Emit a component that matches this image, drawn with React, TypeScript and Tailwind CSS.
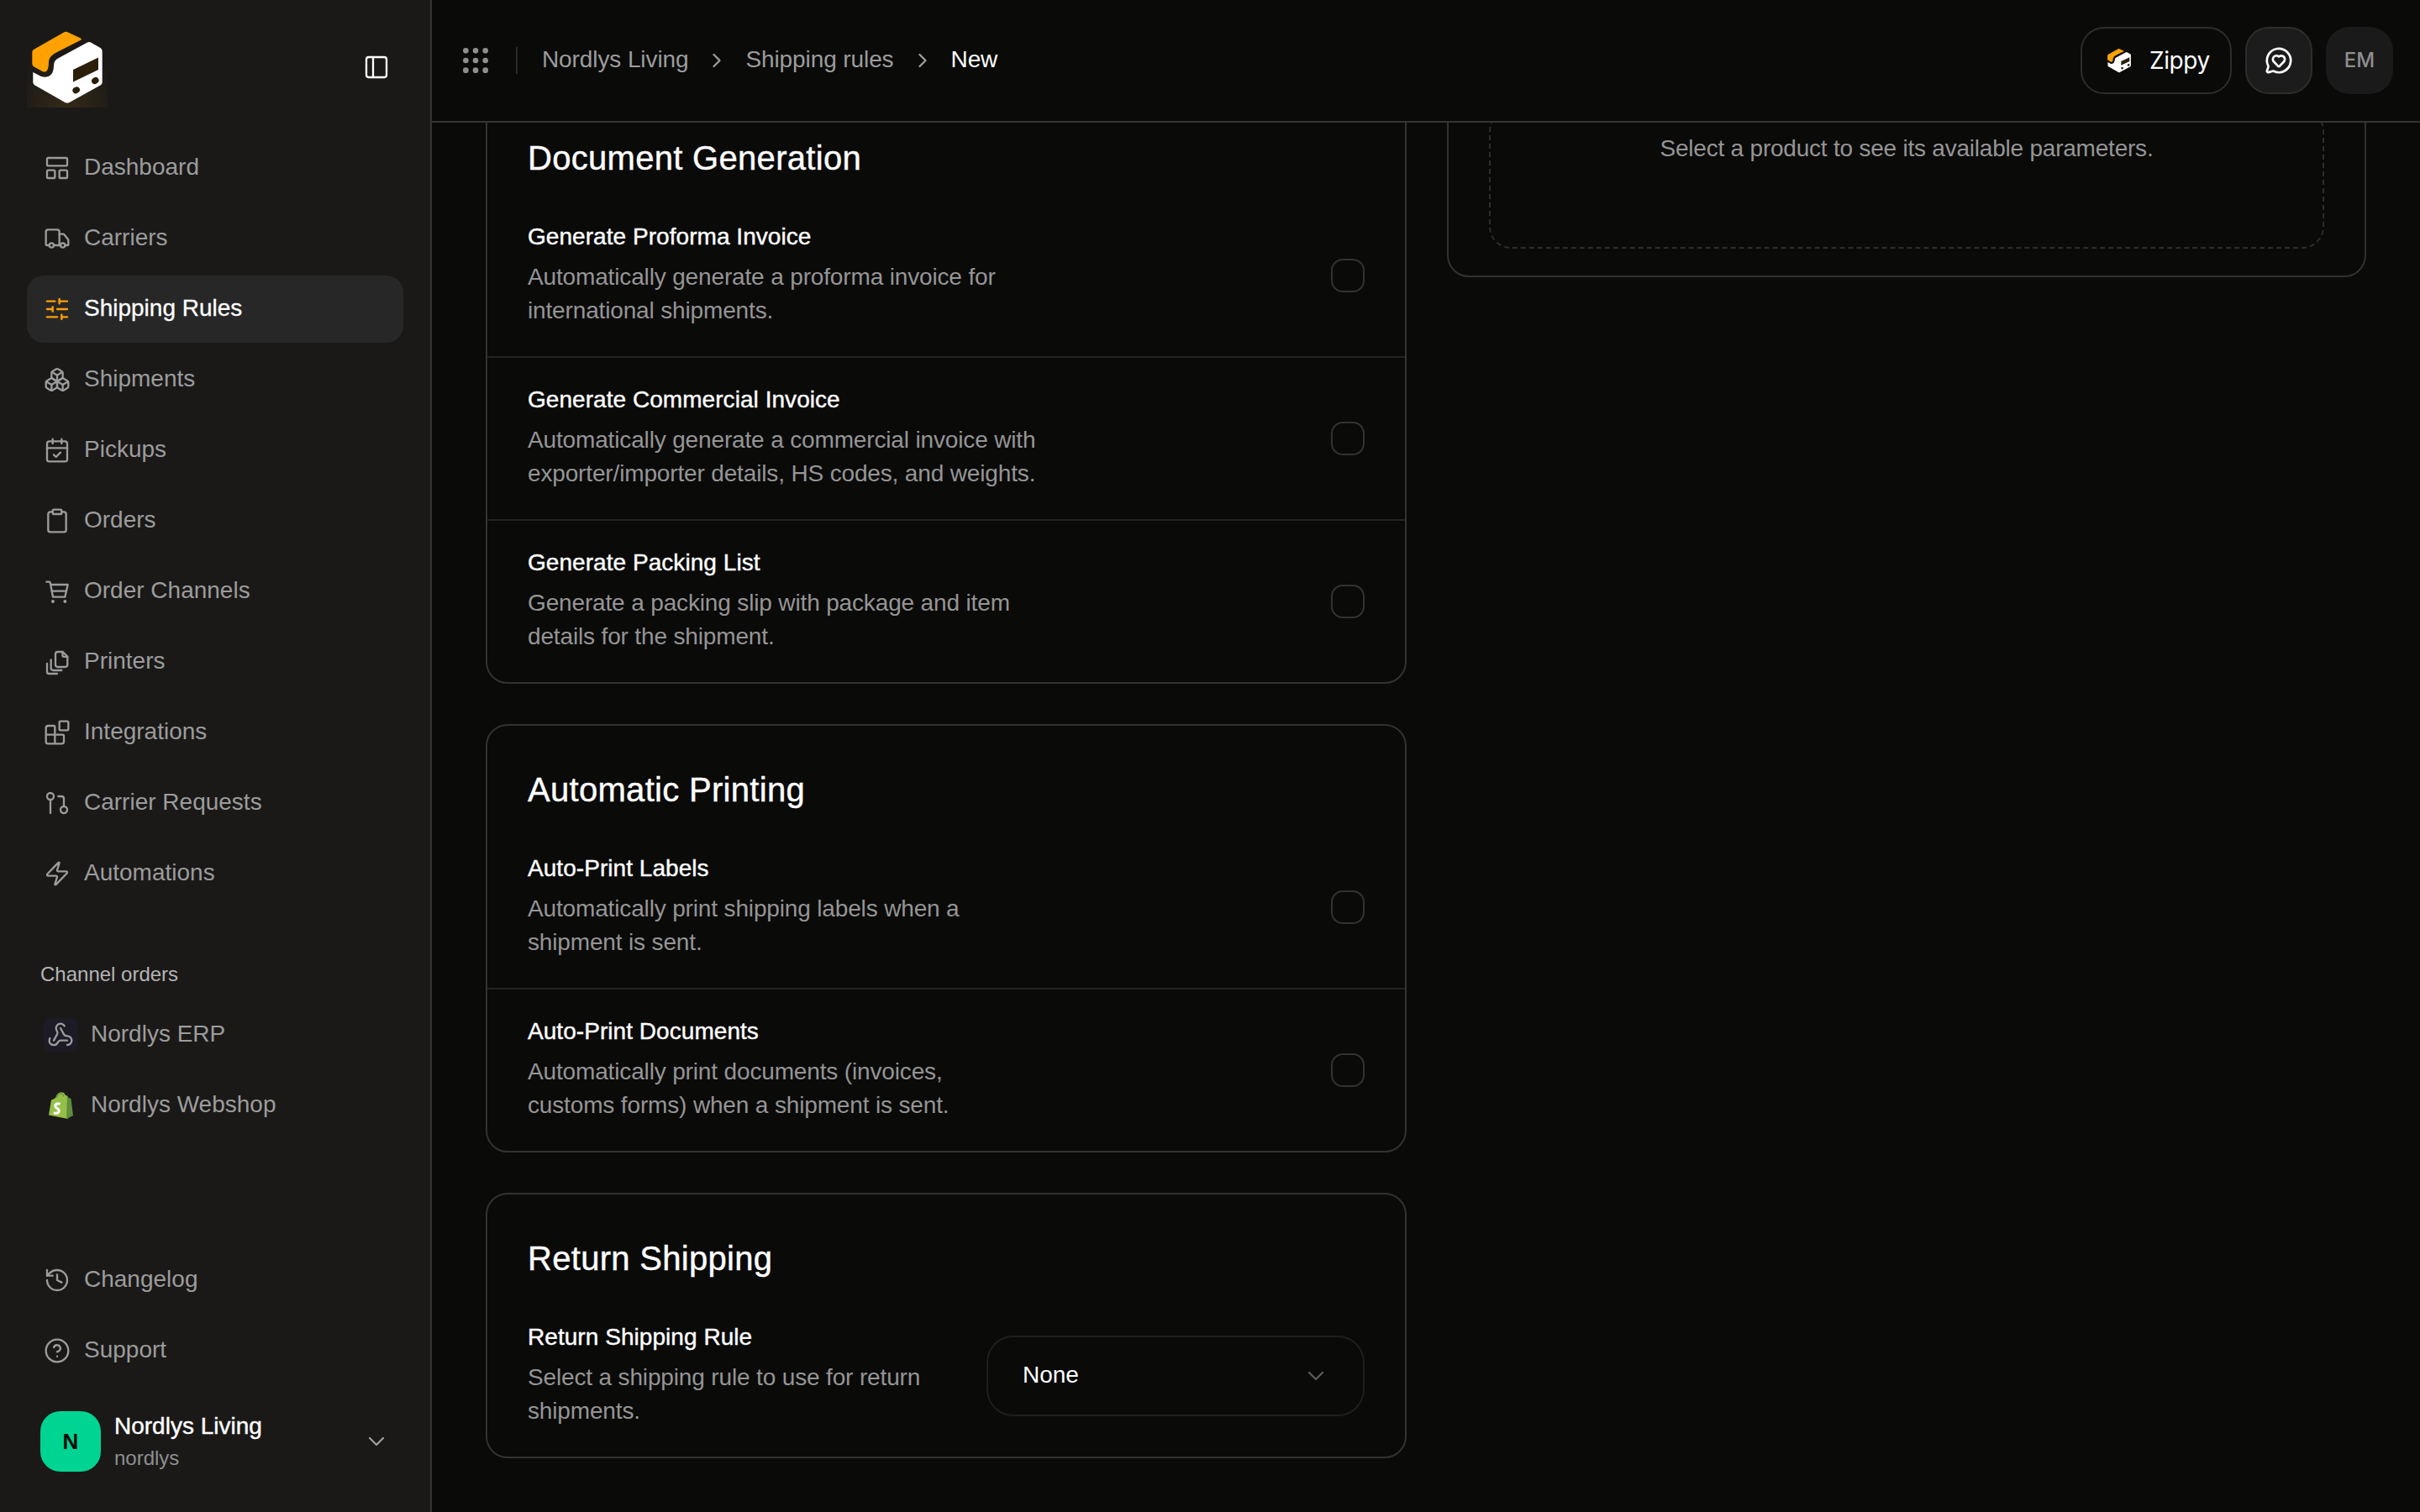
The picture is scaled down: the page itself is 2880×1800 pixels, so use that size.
import type { ReactNode } from "react";
import {
  Blocks,
  Boxes,
  CalendarCheck,
  ChevronDown,
  ChevronRight,
  CircleHelp,
  Clipboard,
  GitPullRequest,
  Grip,
  History,
  LayoutPanelTop,
  MessageCircleHeart,
  PanelLeft,
  SlidersHorizontal,
  Truck,
  Webhook,
  Zap,
} from "lucide-react";

function CartIcon() {
  return (
    <svg viewBox="0 0 24 24" width={32} height={32} fill="none" stroke="currentColor" strokeWidth={1.75} strokeLinecap="round" strokeLinejoin="round">
      <path d="M2.5 3.5 H5 Q5.6 3.5 5.8 4.2 L8.3 17 H19 L21.5 6 H6.2" />
      <path d="M7.2 11.7 H20.2" />
      <circle cx="8.2" cy="21" r="1.5" fill="currentColor" stroke="none" />
      <circle cx="19" cy="21" r="1.5" fill="currentColor" stroke="none" />
    </svg>
  );
}

function PrintersIcon() {
  return (
    <svg viewBox="0 0 24 24" width={32} height={32} fill="none" stroke="currentColor" strokeWidth={1.75} strokeLinecap="round" strokeLinejoin="round">
      <path d="M12.5 3 H17 L21.2 7.2 V14.5 a2 2 0 0 1 -2 2 H12.5 a2 2 0 0 1 -2 -2 V5 a2 2 0 0 1 2 -2 Z" />
      <path d="M16.8 3 V6 a1.4 1.4 0 0 0 1.4 1.4 H21.2" />
      <path d="M6.5 10 V17.5 a2 2 0 0 0 2 2 H16" />
      <path d="M3 13.5 V21 a1.5 1.5 0 0 0 1.5 1.5 H12" />
    </svg>
  );
}

const navItems = [
  { label: "Dashboard", icon: <LayoutPanelTop size={32} strokeWidth={1.75} /> },
  { label: "Carriers", icon: <Truck size={32} strokeWidth={1.75} /> },
  { label: "Shipping Rules", icon: <SlidersHorizontal size={32} strokeWidth={1.75} className="text-[#ff9f0a]" />, active: true },
  { label: "Shipments", icon: <Boxes size={32} strokeWidth={1.75} /> },
  { label: "Pickups", icon: <CalendarCheck size={32} strokeWidth={1.75} /> },
  { label: "Orders", icon: <Clipboard size={32} strokeWidth={1.75} /> },
  { label: "Order Channels", icon: <CartIcon /> },
  { label: "Printers", icon: <PrintersIcon /> },
  { label: "Integrations", icon: <Blocks size={32} strokeWidth={1.75} /> },
  { label: "Carrier Requests", icon: <GitPullRequest size={32} strokeWidth={1.75} /> },
  { label: "Automations", icon: <Zap size={32} strokeWidth={1.75} /> },
];

const documentRows = [
  {
    title: "Generate Proforma Invoice",
    lines: ["Automatically generate a proforma invoice for", "international shipments."],
  },
  {
    title: "Generate Commercial Invoice",
    lines: ["Automatically generate a commercial invoice with", "exporter/importer details, HS codes, and weights."],
  },
  {
    title: "Generate Packing List",
    lines: ["Generate a packing slip with package and item", "details for the shipment."],
  },
];

const printRows = [
  {
    title: "Auto-Print Labels",
    lines: ["Automatically print shipping labels when a", "shipment is sent."],
  },
  {
    title: "Auto-Print Documents",
    lines: ["Automatically print documents (invoices,", "customs forms) when a shipment is sent."],
  },
];

function Logo({ glow, className }: { glow?: boolean; className: string }) {
  return (
    <svg viewBox="0 0 96 96" className={className}>
      {glow && (
        <>
          <defs>
            <radialGradient id="logo-glow" cx="50%" cy="100%" r="70%">
              <stop offset="0%" stopColor="#f59e0b" stopOpacity="0.12" />
              <stop offset="100%" stopColor="#f59e0b" stopOpacity="0" />
            </radialGradient>
          </defs>
          <rect width="96" height="96" fill="url(#logo-glow)" />
        </>
      )}
      <path
        d="M8 27 L44 6.5 Q46.5 5.2 49 6.5 L64 13.5 Q66 14.8 64 15.8 L37 29.5 Q27 34 26 41 Q26 49 24 52 Q22 54.5 18.5 53 L8.5 47.5 Q6.3 46 6.3 44 L6.3 30 Q6.3 28 8 27 Z"
        fill="#ffa100"
      />
      <path
        d="M7.3 54 L17 59 Q24 61.5 29 56.5 Q32 53 32 46 Q32 40 37 37.5 L72 18.5 Q74 17.5 76 18.5 L87.5 25 Q89.7 26.5 89.7 29 L89.7 66 Q89.7 68 87.5 69.5 L50.5 90 Q48 91.2 45.5 90 L9.5 69.5 Q7.3 68 7.3 66 Z"
        fill="#ffffff"
      />
      <path d="M55 51 L85 36.5 L85 51 L55 65.5 Z" fill="#2b1f0c" />
      <ellipse cx="58.7" cy="75.3" rx="4.4" ry="3.8" transform="rotate(-30 58.7 75.3)" fill="#2b1f0c" />
      <ellipse cx="81.3" cy="64" rx="4.4" ry="3.8" transform="rotate(-30 81.3 64)" fill="#2b1f0c" />
    </svg>
  );
}

function ShopifyBag() {
  return (
    <svg viewBox="0 0 29 32" className="h-8 w-[29px]">
      <path d="M0 27.5 L3 9.5 Q7.5 8 8.5 6 Q10.5 0.5 15 0.3 Q18.5 0.3 19.5 3.5 L22.5 5 L23 32 Z" fill="#95bf47" />
      <path d="M22 4.8 L24 7 L26.5 7.8 L29 28 L21 32 Z" fill="#5e8e3e" />
      <path d="M9.5 7 Q11 2 14.5 1.8 Q17 1.8 17.8 5.5" fill="none" stroke="#5e8e3e" strokeWidth="1.1" />
      <path d="M13.6 14.3 Q9.5 12.7 8 15.4 Q7 18 10.2 19.6 Q13.2 21.2 11.8 24 Q9.8 26.4 5.8 24.6" fill="none" stroke="#ffffff" strokeWidth="3" />
    </svg>
  );
}

function Sidebar() {
  return (
    <aside className="flex h-[1800px] w-[514px] shrink-0 flex-col border-r-2 border-[#353432] bg-[#1a1918]">
      <div className="flex h-[160px] shrink-0 items-center justify-between pl-8 pr-[48px]">
        <Logo glow className="size-24" />
        <PanelLeft size={32} strokeWidth={1.75} className="text-white" />
      </div>
      <nav className="flex flex-col gap-1 px-8">
        {navItems.map((item) => (
          <div
            key={item.label}
            className={
              item.active
                ? "flex h-20 items-center gap-4 rounded-[20px] bg-[#272727] pl-5 text-white"
                : "flex h-20 items-center gap-4 rounded-[20px] pl-5 text-[#9c9c9c]"
            }
          >
            {item.icon}
            <span className={item.active ? "pb-0.5 text-[28px] leading-10 [-webkit-text-stroke:0.3px_#ffffff]" : "pb-0.5 text-[28px] leading-10"}>
              {item.label}
            </span>
          </div>
        ))}
      </nav>
      <div className="mt-16 pl-12 text-[24px] leading-8 text-[#b5b5b5]">Channel orders</div>
      <div className="mt-4 flex flex-col gap-1 px-8">
        <div className="flex h-20 items-center pl-5 text-[#9c9c9c]">
          <div className="flex size-10 items-center justify-center rounded-lg bg-[#1c1b26]">
            <Webhook size={32} strokeWidth={1.75} />
          </div>
          <span className="ml-4 pb-0.5 text-[28px] leading-10">Nordlys ERP</span>
        </div>
        <div className="flex h-20 items-center pl-5 text-[#9c9c9c]">
          <div className="flex size-10 items-center justify-center">
            <ShopifyBag />
          </div>
          <span className="ml-4 pb-0.5 text-[28px] leading-10">Nordlys Webshop</span>
        </div>
      </div>
      <div className="mt-auto flex flex-col gap-1 px-8">
        <div className="flex h-20 items-center gap-4 pl-5 text-[#9c9c9c]">
          <History size={32} strokeWidth={1.75} />
          <span className="pb-0.5 text-[28px] leading-10">Changelog</span>
        </div>
        <div className="flex h-20 items-center gap-4 pl-5 text-[#9c9c9c]">
          <CircleHelp size={32} strokeWidth={1.75} />
          <span className="pb-0.5 text-[28px] leading-10">Support</span>
        </div>
      </div>
      <div className="mb-[46px] mt-[30px] flex items-center pl-12 pr-12">
        <div className="flex size-[72px] shrink-0 items-center justify-center rounded-[24px] bg-[#00d492] text-[26px] font-bold text-[#0a0a0a]">
          N
        </div>
        <div className="ml-4 flex flex-col">
          <span className="text-[28px] leading-10 text-white [-webkit-text-stroke:0.4px_#ffffff]">Nordlys Living</span>
          <span className="text-[24px] leading-9 text-[#8f8f8f]">nordlys</span>
        </div>
        <ChevronDown size={32} strokeWidth={1.75} className="ml-auto text-[#9c9c9c]" />
      </div>
    </aside>
  );
}

function Header() {
  return (
    <header className="flex h-[146px] shrink-0 items-center justify-between border-b-2 border-[#353432] bg-[#0a0a09] pl-8 pr-8">
      <div className="flex items-center text-[28px] leading-10 tracking-[-0.1px]">
        <Grip size={40} className="text-[#8f8f8f]" />
        <div className="ml-7 mr-[29px] h-8 w-0.5 bg-[#2a2a2a]" />
        <span className="pb-0.5 text-[#9c9c9c]">Nordlys Living</span>
        <ChevronRight size={28} className="mx-5 text-[#9c9c9c]" />
        <span className="pb-0.5 text-[#9c9c9c]">Shipping rules</span>
        <ChevronRight size={28} className="mx-5 text-[#9c9c9c]" />
        <span className="pb-0.5 text-white">New</span>
      </div>
      <div className="flex items-center gap-4">
        <button className="flex h-20 w-[180px] items-center rounded-[28px] border-2 border-[#2e2d2b] pl-7 font-['Inter',sans-serif] text-[28px] tracking-[-0.4px] text-white">
          <Logo className="size-8" />
          <span className="ml-5">Zippy</span>
        </button>
        <button className="flex size-20 items-center justify-center rounded-[28px] border-2 border-[#2e2d2b] bg-[#1c1c1c] text-white">
          <MessageCircleHeart size={34} strokeWidth={1.9} />
        </button>
        <div className="flex size-20 items-center justify-center rounded-[28px] bg-[#1a1a1a] font-['Inter',sans-serif] text-[24px] font-medium text-[#8f8f8f]">
          EM
        </div>
      </div>
    </header>
  );
}

function Checkbox() {
  return <div className="size-10 shrink-0 rounded-[14px] border-2 border-[#333231]" />;
}

function RowText({ title, lines }: { title: string; lines: string[] }) {
  return (
    <div className="-mt-0.5 mb-0.5">
      <div className="text-[28px] leading-10 tracking-[0.05px] text-white [-webkit-text-stroke:0.4px_#ffffff]">{title}</div>
      <div className="mt-2 text-[28px] leading-10 tracking-[-0.15px] text-[#959595]">
        {lines[0]}
        <br />
        {lines[1]}
      </div>
    </div>
  );
}

function CheckRow({ title, lines, last }: { title: string; lines: string[]; last?: boolean }) {
  return (
    <div className={last ? "flex items-center justify-between px-12 py-8" : "flex items-center justify-between border-b-2 border-[#232322] px-12 py-8"}>
      <RowText title={title} lines={lines} />
      <Checkbox />
    </div>
  );
}

function Card({ title, children }: { title: string; children: ReactNode }) {
  return (
    <section className="rounded-[26px] border-2 border-[#333231] bg-[#0a0a09]">
      <h2 className="px-12 pb-4 pt-12 text-[40px] leading-14 tracking-[0.3px] text-white [-webkit-text-stroke:0.4px_#ffffff]">{title}</h2>
      {children}
    </section>
  );
}

export default function App() {
  return (
    <div className="flex h-[1800px] w-[2880px] overflow-hidden bg-[#0a0a09] font-['Liberation_Sans',sans-serif]">
      <Sidebar />
      <div className="flex min-w-0 flex-1 flex-col">
        <Header />
        <main className="flex-1 overflow-hidden pl-16 pr-16">
          <div className="-mt-9 grid grid-cols-[1096px_1fr] items-start gap-12">
            <div className="flex flex-col gap-12">
              <Card title="Document Generation">
                {documentRows.map((row, i) => (
                  <CheckRow key={row.title} title={row.title} lines={row.lines} last={i === documentRows.length - 1} />
                ))}
              </Card>
              <Card title="Automatic Printing">
                {printRows.map((row, i) => (
                  <CheckRow key={row.title} title={row.title} lines={row.lines} last={i === printRows.length - 1} />
                ))}
              </Card>
              <Card title="Return Shipping">
                <div className="flex items-center justify-between px-12 py-8">
                  <RowText title="Return Shipping Rule" lines={["Select a shipping rule to use for return", "shipments."]} />
                  <div className="flex h-24 w-[450px] items-center justify-between rounded-[32px] border-2 border-[#1f1f1e] pl-[41px] pr-10 text-[28px] text-white">
                    <span className="pb-0.5">None</span>
                    <ChevronDown size={32} strokeWidth={1.75} className="text-[#5c5c5c]" />
                  </div>
                </div>
              </Card>
            </div>
            <div className="rounded-[26px] border-2 border-[#333231] px-12 pb-8 pt-[18px]">
              <div className="h-[166px] rounded-[26px] border-2 border-dashed border-[#2e2d2b] pt-[25px] text-center text-[28px] leading-10 tracking-[-0.22px] text-[#959595]">
                Select a product to see its available parameters.
              </div>
            </div>
          </div>
        </main>
      </div>
    </div>
  );
}
